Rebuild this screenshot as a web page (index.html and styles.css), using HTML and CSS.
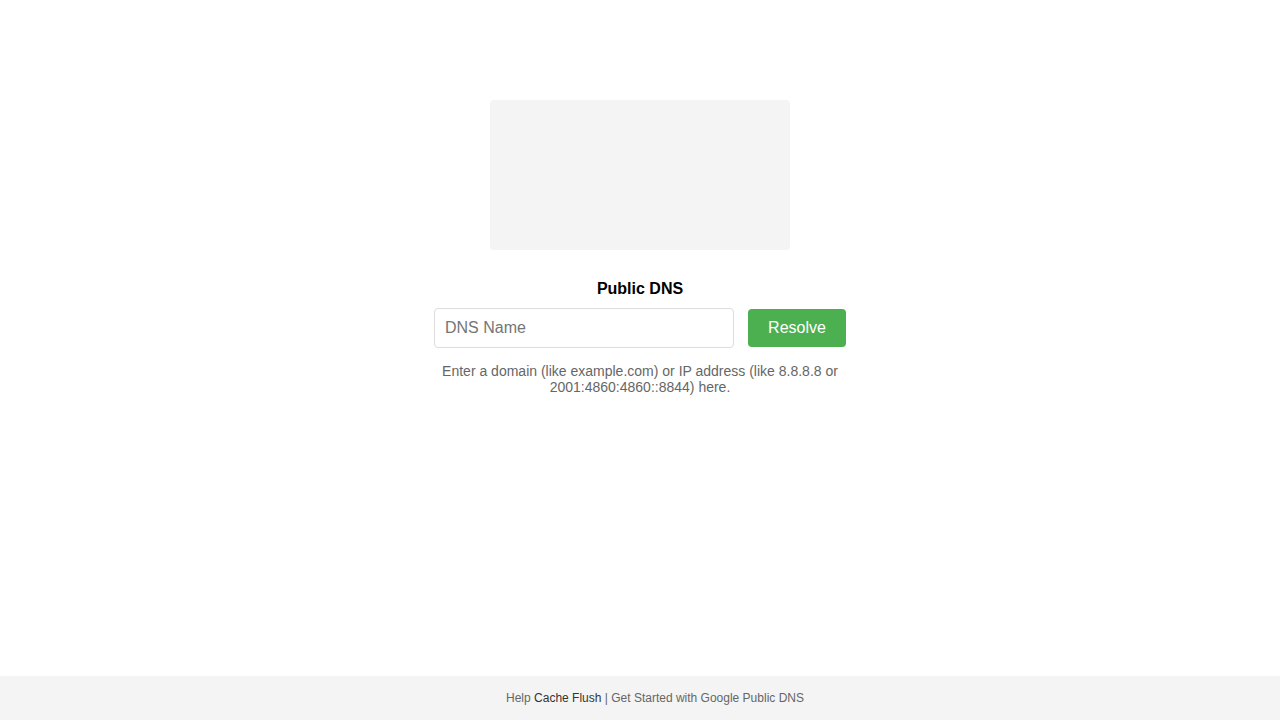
FILE: index.html
```html
<!DOCTYPE html>
<html lang="en">
<head>
<meta charset="utf-8">
<title>Public DNS</title>
<link rel="stylesheet" href="styles.css">
</head>
<body>
<div class="page">
  <main class="main">
    <div class="logo-box"></div>
    <h1 class="title">Public DNS</h1>
    <form class="form">
      <input class="dns-input" type="text" placeholder="DNS Name">
      <button class="resolve-btn" type="button">Resolve</button>
    </form>
    <p class="hint">Enter a domain (like example.com) or IP address (like 8.8.8.8 or 2001:4860:4860::8844) here.</p>
  </main>
  <footer class="footer">Help <a class="footer-link" href="#">Cache Flush</a> | Get Started with Google Public DNS</footer>
</div>
</body>
</html>
```

FILE: styles.css
```css
html, body {
  margin: 0;
  padding: 0;
  background: #fff;
  font-family: "Liberation Sans", Arial, sans-serif;
}

.page {
  min-height: 100vh;
  display: flex;
  flex-direction: column;
}

.main {
  flex: 1;
  display: flex;
  flex-direction: column;
  align-items: center;
  padding-top: 100px;
}

.logo-box {
  width: 300px;
  height: 150px;
  background: #f4f4f4;
  border-radius: 4px;
}

.title {
  margin: 30px 0 10px;
  font-size: 16px;
  line-height: 18px;
  font-weight: bold;
  color: #000;
}

.form {
  display: flex;
  align-items: center;
  gap: 14px;
  margin: 0;
}

.dns-input {
  box-sizing: border-box;
  width: 300px;
  height: 40px;
  padding: 0 10px;
  border: 1px solid #ddd;
  border-radius: 4px;
  font-family: inherit;
  font-size: 16px;
  color: #333;
  outline: none;
}

.dns-input::placeholder {
  color: #757575;
}

.resolve-btn {
  box-sizing: border-box;
  width: 98px;
  height: 38px;
  border: none;
  border-radius: 4px;
  background: #4caf50;
  color: #fff;
  font-family: inherit;
  font-size: 16px;
  cursor: pointer;
}

.hint {
  width: 412px;
  margin: 15px 0 0;
  text-align: center;
  font-size: 14px;
  line-height: 16px;
  color: #666;
}

.footer {
  height: 44px;
  line-height: 44px;
  padding-left: 30px;
  text-align: center;
  background: #f4f4f4;
  font-size: 12px;
  color: #666;
}

.footer-link {
  color: #333;
  text-decoration: none;
}
```
